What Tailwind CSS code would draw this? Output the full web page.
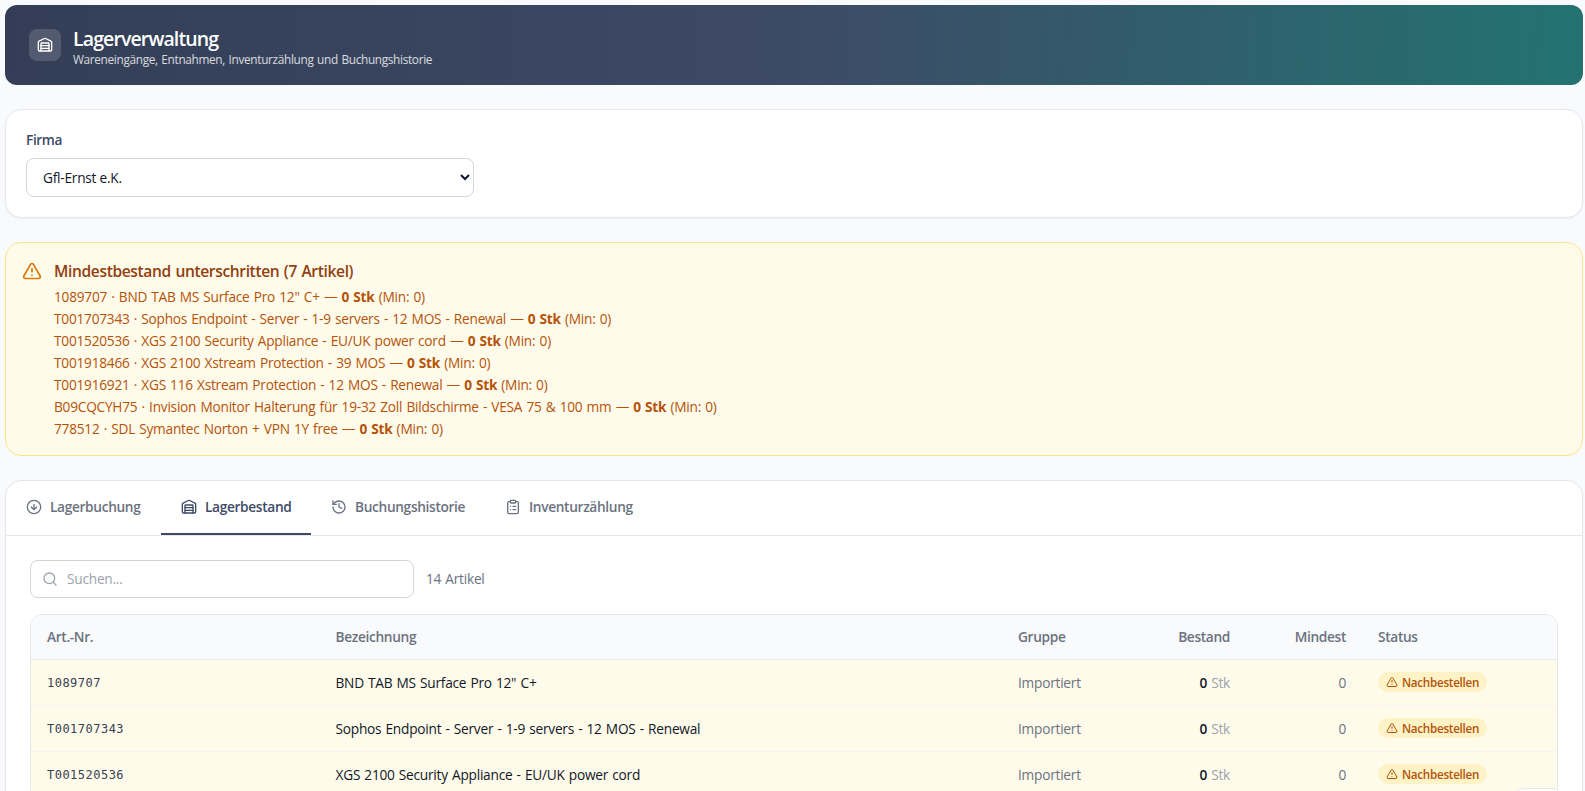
<!DOCTYPE html>
<html lang="de">
<head>
    <meta charset="UTF-8">
    <meta name="viewport" content="width=device-width, initial-scale=1.0">
    <title>Lagerverwaltung</title>
    <script src="https://cdn.jsdelivr.net/npm/@tailwindcss/browser@4"></script>
</head>
<body class="bg-[#f9fafc] h-screen overflow-hidden font-['Segoe_UI','Open_Sans',sans-serif] text-[13.7px] leading-5 tracking-[-0.24px] [word-spacing:0.85px] text-[#111827]">
<!-- Icons -->
<svg class="hidden">
    <symbol id="warehouse" viewBox="0 0 24 24">
        <path d="M18 21V10a1 1 0 0 0-1-1H7a1 1 0 0 0-1 1v11"/>
        <path d="M22 19a2 2 0 0 1-2 2H4a2 2 0 0 1-2-2V8a2 2 0 0 1 1.132-1.803l7.95-3.974a2 2 0 0 1 1.837 0l7.948 3.974A2 2 0 0 1 22 8z"/>
        <path d="M6 13h12M6 17h12"/>
    </symbol>
    <symbol id="warn" viewBox="0 0 24 24">
        <path d="m21.73 18-8-14a2 2 0 0 0-3.48 0l-8 14A2 2 0 0 0 4 21h16a2 2 0 0 0 1.73-3M12 9v4M12 17h.01"/>
    </symbol>
    <symbol id="down" viewBox="0 0 24 24">
        <circle cx="12" cy="12" r="10"/><path d="M12 8v8M8 12l4 4 4-4"/>
    </symbol>
    <symbol id="history" viewBox="0 0 24 24">
        <path d="M3 12a9 9 0 1 0 9-9 9.75 9.75 0 0 0-6.74 2.74L3 8"/><path d="M3 3v5h5M12 7v5l4 2"/>
    </symbol>
    <symbol id="clipboard" viewBox="0 0 24 24">
        <rect width="8" height="4" x="8" y="2" rx="1" ry="1"/>
        <path d="M16 4h2a2 2 0 0 1 2 2v14a2 2 0 0 1-2 2H6a2 2 0 0 1-2-2V6a2 2 0 0 1 2-2h2M12 11h4M12 16h4M8 11h.01M8 16h.01"/>
    </symbol>
    <symbol id="search" viewBox="0 0 24 24">
        <circle cx="11" cy="11" r="8"/><path d="m21 21-4.3-4.3"/>
    </symbol>
</svg>

<main class="ml-[5px] mr-[2px] pt-[5px] flex flex-col gap-6">
    <header class="h-20 px-6 rounded-xl bg-linear-[92deg] from-[#333e56] via-[#3d4a66] to-[#237371] flex items-center gap-3 text-white">
        <div class="size-8 rounded-lg bg-white/15 flex items-center justify-center">
            <svg class="size-4 fill-none stroke-current stroke-2 [stroke-linecap:round] [stroke-linejoin:round]"><use href="#warehouse"/></svg>
        </div>
        <div class="pt-1">
            <h1 class="text-[19.5px] leading-[25px] font-semibold tracking-[-0.88px]">Lagerverwaltung</h1>
            <p class="text-[11.8px] leading-[17px] text-white/80 tracking-[-0.32px]">Wareneingänge, Entnahmen, Inventurzählung und Buchungshistorie</p>
        </div>
    </header>

    <section class="bg-white border border-[#e5e7eb] rounded-2xl shadow-xs p-5">
        <label class="block font-semibold text-[#3d4a66] tracking-[-0.4px] mb-2" for="firma">Firma</label>
        <select id="firma" class="block w-[448px] h-[39px] px-3 border border-[#d1d5db] rounded-lg bg-white">
            <option>Gfl-Ernst e.K.</option>
        </select>
    </section>

    <section class="bg-[#fffbeb] border border-[#fde68a] rounded-2xl p-4 flex gap-3 text-[#b45309]">
        <svg class="size-5 shrink-0 mt-0.5 text-[#d97706] fill-none stroke-current stroke-2 [stroke-linecap:round] [stroke-linejoin:round]"><use href="#warn"/></svg>
        <div>
            <h2 class="text-[15.6px] leading-6 font-semibold text-[#92400e] tracking-[-0.38px]">Mindestbestand unterschritten (7 Artikel)</h2>
            <ul id="alerts" class="mt-1 space-y-0.5"></ul>
        </div>
    </section>

    <section class="bg-white border border-[#e5e7eb] rounded-2xl shadow-xs">
        <nav class="flex border-b border-[#e5e7eb] font-semibold text-[#6b7280] tracking-[-0.33px]">
            <button class="w-[155px] h-[54px] px-5 border-b-2 border-transparent flex items-center gap-2">
                <svg class="size-4 shrink-0 fill-none stroke-current stroke-2 [stroke-linecap:round] [stroke-linejoin:round]"><use href="#down"/></svg>
                Lagerbuchung
            </button>
            <button class="w-[150px] h-[54px] px-5 border-b-2 border-[#3d4a66] text-[#3d4a66] flex items-center gap-2">
                <svg class="size-4 shrink-0 fill-none stroke-current stroke-2 [stroke-linecap:round] [stroke-linejoin:round]"><use href="#warehouse"/></svg>
                Lagerbestand
            </button>
            <button class="w-[174px] h-[54px] px-5 border-b-2 border-transparent flex items-center gap-2">
                <svg class="size-4 shrink-0 fill-none stroke-current stroke-2 [stroke-linecap:round] [stroke-linejoin:round]"><use href="#history"/></svg>
                Buchungshistorie
            </button>
            <button class="w-[168px] h-[54px] px-5 border-b-2 border-transparent flex items-center gap-2">
                <svg class="size-4 shrink-0 fill-none stroke-current stroke-2 [stroke-linecap:round] [stroke-linejoin:round]"><use href="#clipboard"/></svg>
                Inventurzählung
            </button>
        </nav>
        <div class="p-6">
            <div class="flex items-center gap-3 mb-4">
                <div class="w-96 h-[38px] px-[11px] border border-[#d1d5db] rounded-lg flex items-center gap-[9px] text-[#9ca3af]">
                    <svg class="size-4 shrink-0 fill-none stroke-current stroke-2 [stroke-linecap:round] [stroke-linejoin:round]"><use href="#search"/></svg>
                    <input type="text" placeholder="Suchen..." class="grow outline-none placeholder:text-[#9ca3af]">
                </div>
                <span class="text-[#6b7280]">14 Artikel</span>
            </div>
            <div class="border border-[#e5e7eb] rounded-xl overflow-hidden">
                <table class="w-full table-fixed">
                    <colgroup>
                        <col class="w-[288.5px]"><col class="w-[682.5px]"><col class="w-[146px]"><col class="w-[98px]"><col class="w-[116px]"><col>
                    </colgroup>
                    <thead class="bg-[#f9fafc] text-[#6b7280] text-left border-b border-[#e5e7eb]">
                        <tr class="h-[44px] *:px-4 *:font-semibold tracking-[-0.33px]">
                            <th>Art.-Nr.</th><th>Bezeichnung</th><th>Gruppe</th>
                            <th class="text-right">Bestand</th><th class="text-right">Mindest</th><th>Status</th>
                        </tr>
                    </thead>
                    <tbody id="rows"></tbody>
                </table>
            </div>
        </div>
    </section>
</main>
<div class="fixed left-[1515px] top-[788px] w-[46px] h-10 bg-white border border-[#e5e7eb] rounded-lg"></div>

<script>
const artikel = [
    ['1089707', 'BND TAB MS Surface Pro 12" C+'],
    ['T001707343', 'Sophos Endpoint - Server - 1-9 servers - 12 MOS - Renewal'],
    ['T001520536', 'XGS 2100 Security Appliance - EU/UK power cord'],
    ['T001918466', 'XGS 2100 Xstream Protection - 39 MOS'],
    ['T001916921', 'XGS 116 Xstream Protection - 12 MOS - Renewal'],
    ['B09CQCYH75', 'Invision Monitor Halterung für 19-32 Zoll Bildschirme - VESA 75 & 100 mm'],
    ['778512', 'SDL Symantec Norton + VPN 1Y free'],
];
const esc = s => s.replace(/&/g, '&amp;');

document.getElementById('alerts').innerHTML = artikel.map(([nr, name]) => `
    <li>${nr} · ${esc(name)} — <strong>0 Stk</strong> (Min: 0)</li>`).join('');

document.getElementById('rows').innerHTML = artikel.slice(0, 3).map(([nr, name]) => `
    <tr class="h-[46px] bg-[#fffbeb] border-b border-[#f3f4f6] text-[#6b7280] *:px-4">
        <td class="pt-0.5 font-['Consolas','DejaVu_Sans_Mono',monospace] text-xs tracking-[0.48px] text-[#374151]">${nr}</td>
        <td class="pt-0.5 text-[#111827]">${esc(name)}</td>
        <td class="pt-0.5">Importiert</td>
        <td class="pt-0.5 text-right"><span class="font-semibold text-[#111827]">0</span> <span class="text-[#9ca3af]">Stk</span></td>
        <td class="pt-0.5 text-right">0</td>
        <td>
            <span class="flex w-[109px] h-5 mb-px items-center gap-1 px-2 rounded-full bg-[#fef3c7] text-[#b45309] text-[11.7px] tracking-[-0.29px] font-semibold">
                <svg class="size-3 shrink-0 fill-none stroke-current stroke-2 [stroke-linecap:round] [stroke-linejoin:round]"><use href="#warn"/></svg>
                Nachbestellen
            </span>
        </td>
    </tr>`).join('');
</script>
</body>
</html>
